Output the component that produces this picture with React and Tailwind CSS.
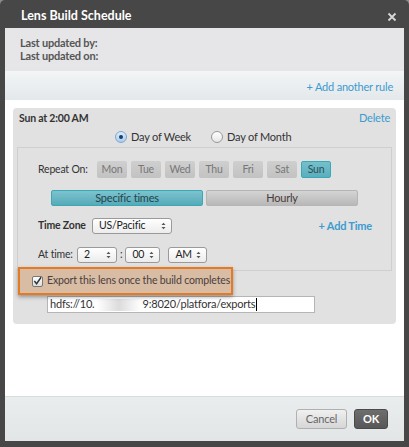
import { useState } from 'react'

const days = ['Mon', 'Tue', 'Wed', 'Thu', 'Fri', 'Sat', 'Sun']

const Select = ({ value, className }) => (
	<div
		className={`flex h-[16px] items-center justify-between rounded-[3px] border border-[#9a9a9a] bg-gradient-to-b from-white to-[#ececec] pl-[6px] pr-[5px] text-[#222] ${className}`}
	>
		<span>{value}</span>
		<svg width="5" height="8" viewBox="0 0 5 8" className="text-[#555]">
			<path d="M0.5 3 L2.5 0.8 L4.5 3 Z M0.5 5 L2.5 7.2 L4.5 5 Z" fill="currentColor" />
		</svg>
	</div>
)

const App = () => {
	const [mode, setMode] = useState('week')

	return (
		<div className="h-[447px] w-[409px] bg-[#8c8c8c] font-['Lato','Liberation_Sans',sans-serif] text-[10.5px] tracking-[-0.2px]">
			<div className="flex h-full flex-col rounded-t-[5px] bg-[#474747] px-[5px] pb-[6px]">
				{/* header */}
				<div className="flex h-[28px] shrink-0 items-center justify-between pl-[16px] pr-[7px] pt-[5px]">
					<span className="text-[12.5px] font-bold tracking-normal text-white">Lens Build Schedule</span>
					<svg width="10" height="10" viewBox="0 0 10 10">
						<path d="M1.5 1.5 L8.5 8.5 M8.5 1.5 L1.5 8.5" stroke="#d8d8d8" strokeWidth="1.8" />
					</svg>
				</div>

				<div className="flex flex-1 flex-col bg-white">
					{/* info */}
					<div className="h-[43px] bg-[#e6e6e8] pl-[15px] pt-[8px] text-[11px] font-bold leading-[13px] text-[#555]">
						<div>Last updated by:</div>
						<div>Last updated on:</div>
					</div>
					<div className="flex h-[29px] items-center justify-end bg-gradient-to-b from-[#f3f5f6] to-[#e3e8ea] pr-[11px] pt-[3px] text-[11px] text-[#3c9bd0]">
						+ Add another rule
					</div>

					{/* rule card */}
					<div className="flex-1 px-[8px] pt-[8px]">
						<div className="rounded-[4px] bg-[#e1e1e1] px-[4px] pb-[11px] pt-[4px]">
							<div className="flex h-[13px] items-center justify-between pl-[2px] pr-[2px]">
								<span className="font-bold text-[#333]">Sun at 2:00 AM</span>
								<span className="text-[11px] text-[#3c9bd0]">Delete</span>
							</div>
							<div className="ml-[98px] mt-[4px] flex h-[16px] items-center gap-[20px] text-[11px] text-[#333]">
								<label className="flex items-center gap-[4px]" onClick={() => setMode('week')}>
									<span className="flex h-[12px] w-[12px] items-center justify-center rounded-full border border-[#7fa7cf] bg-gradient-to-b from-[#dcecfb] to-[#a9cdf0]">
										{mode === 'week' && <span className="h-[4px] w-[4px] rounded-full bg-[#1b3d66]" />}
									</span>
									Day of Week
								</label>
								<label className="flex items-center gap-[4px]" onClick={() => setMode('month')}>
									<span className="flex h-[12px] w-[12px] items-center justify-center rounded-full border border-[#999] bg-gradient-to-b from-white to-[#e6e6e6]">
										{mode === 'month' && <span className="h-[4px] w-[4px] rounded-full bg-[#1b3d66]" />}
									</span>
									Day of Month
								</label>
							</div>

							{/* inner box */}
							<div className="mt-[2px] h-[124px] border border-[#cfcfcf] pl-[20px] pr-[19px] pt-[13px]">
								<div className="flex items-center text-[#333]">
									<span className="w-[59px] whitespace-nowrap">Repeat On:</span>
									<div className="flex gap-[4px]">
										{days.map((d) =>
											d === 'Sun' ? (
												<span
													key={d}
													className="flex h-[17px] w-[30px] items-center justify-center rounded-[2px] border border-[#3aa9b6] bg-gradient-to-b from-[#74c0cc] to-[#5aaebc] text-[#2d4e55]"
												>
													{d}
												</span>
											) : (
												<span
													key={d}
													className="flex h-[17px] w-[30px] items-center justify-center rounded-[2px] bg-gradient-to-b from-[#cfcfcf] to-[#c2c2c2] text-[#777]"
												>
													{d}
												</span>
											)
										)}
									</div>
								</div>

								<div className="ml-[13px] mt-[12px] flex w-[307px] gap-[3px] text-[11px]">
									<span className="flex h-[16px] flex-1 items-center justify-center rounded-[2px] border border-[#3aa9b6] bg-gradient-to-b from-[#7cc3cf] to-[#56aab8] text-[#24444a]">
										Specific times
									</span>
									<span className="flex h-[16px] flex-1 items-center justify-center rounded-[2px] border border-[#b5b5b5] bg-gradient-to-b from-[#d4d4d4] to-[#b8b8b8] text-[#4a3a3a]">
										Hourly
									</span>
								</div>

								<div className="mt-[12px] flex items-center justify-between text-[#333]">
									<div className="flex items-center">
										<span className="w-[54px] whitespace-nowrap font-bold">Time Zone</span>
										<Select value="US/Pacific" className="w-[80px]" />
									</div>
									<span className="whitespace-nowrap text-[11px] font-bold text-[#3c9bd0]">+ Add Time</span>
								</div>

								<div className="mt-[12px] flex items-center text-[#333]">
									<span className="w-[39px] whitespace-nowrap">At time:</span>
									<Select value="2" className="w-[40px]" />
									<span className="mx-[3px]">:</span>
									<Select value="00" className="w-[35px]" />
									<span className="w-[8px]" />
									<Select value="AM" className="w-[39px]" />
								</div>
							</div>

							{/* export */}
							<div className="relative -mt-[4px] ml-[1px] flex h-[28px] w-[215px] items-center gap-[4px] whitespace-nowrap border-2 border-[#e57a22] bg-[#d8bca3] pl-[12px] text-[10.5px] tracking-[-0.15px] text-[#4a4040] shadow-[0_2px_4px_rgba(0,0,0,0.35)]">
								<span className="flex h-[11px] w-[11px] shrink-0 items-center justify-center rounded-[2px] border border-[#777] bg-gradient-to-b from-white to-[#dcdcdc]">
									<svg width="10" height="10" viewBox="0 0 10 10">
										<path d="M1.5 5 L4 8 L9 0.8" stroke="#333" strokeWidth="1.6" fill="none" />
									</svg>
								</span>
								Export this lens once the build completes
							</div>
							<div className="ml-[30px] mt-[1px] flex h-[17px] w-[268px] items-center whitespace-nowrap border border-[#b5b5b5] bg-white pl-[2px] text-[11px] text-[#333]">
								<span>hdfs://10.</span>
								<span className="mx-[2px] h-[12px] w-[44px] bg-gradient-to-r from-white via-[#dcdcdc] to-white" />
								<span>9:8020/platfora/exports</span>
								<span className="ml-[1px] h-[13px] w-px bg-black" />
							</div>
						</div>
					</div>

					{/* footer */}
					<div className="flex h-[45px] shrink-0 items-center justify-end gap-[7px] border-t border-[#d8dcdd] bg-gradient-to-b from-[#e9edee] to-[#e2e6e7] pr-[16px]">
						<button className="h-[20px] w-[51px] rounded-[3px] border border-[#b0b0b0] bg-gradient-to-b from-[#f0f0f0] to-[#d6d6d6] text-[11px] text-[#666]">
							Cancel
						</button>
						<button className="h-[20px] w-[34px] rounded-[3px] border border-[#4a4a4a] bg-gradient-to-b from-[#6e6e6e] to-[#575757] text-[11px] font-bold text-white">
							OK
						</button>
					</div>
				</div>
			</div>
		</div>
	)
}

export default App
